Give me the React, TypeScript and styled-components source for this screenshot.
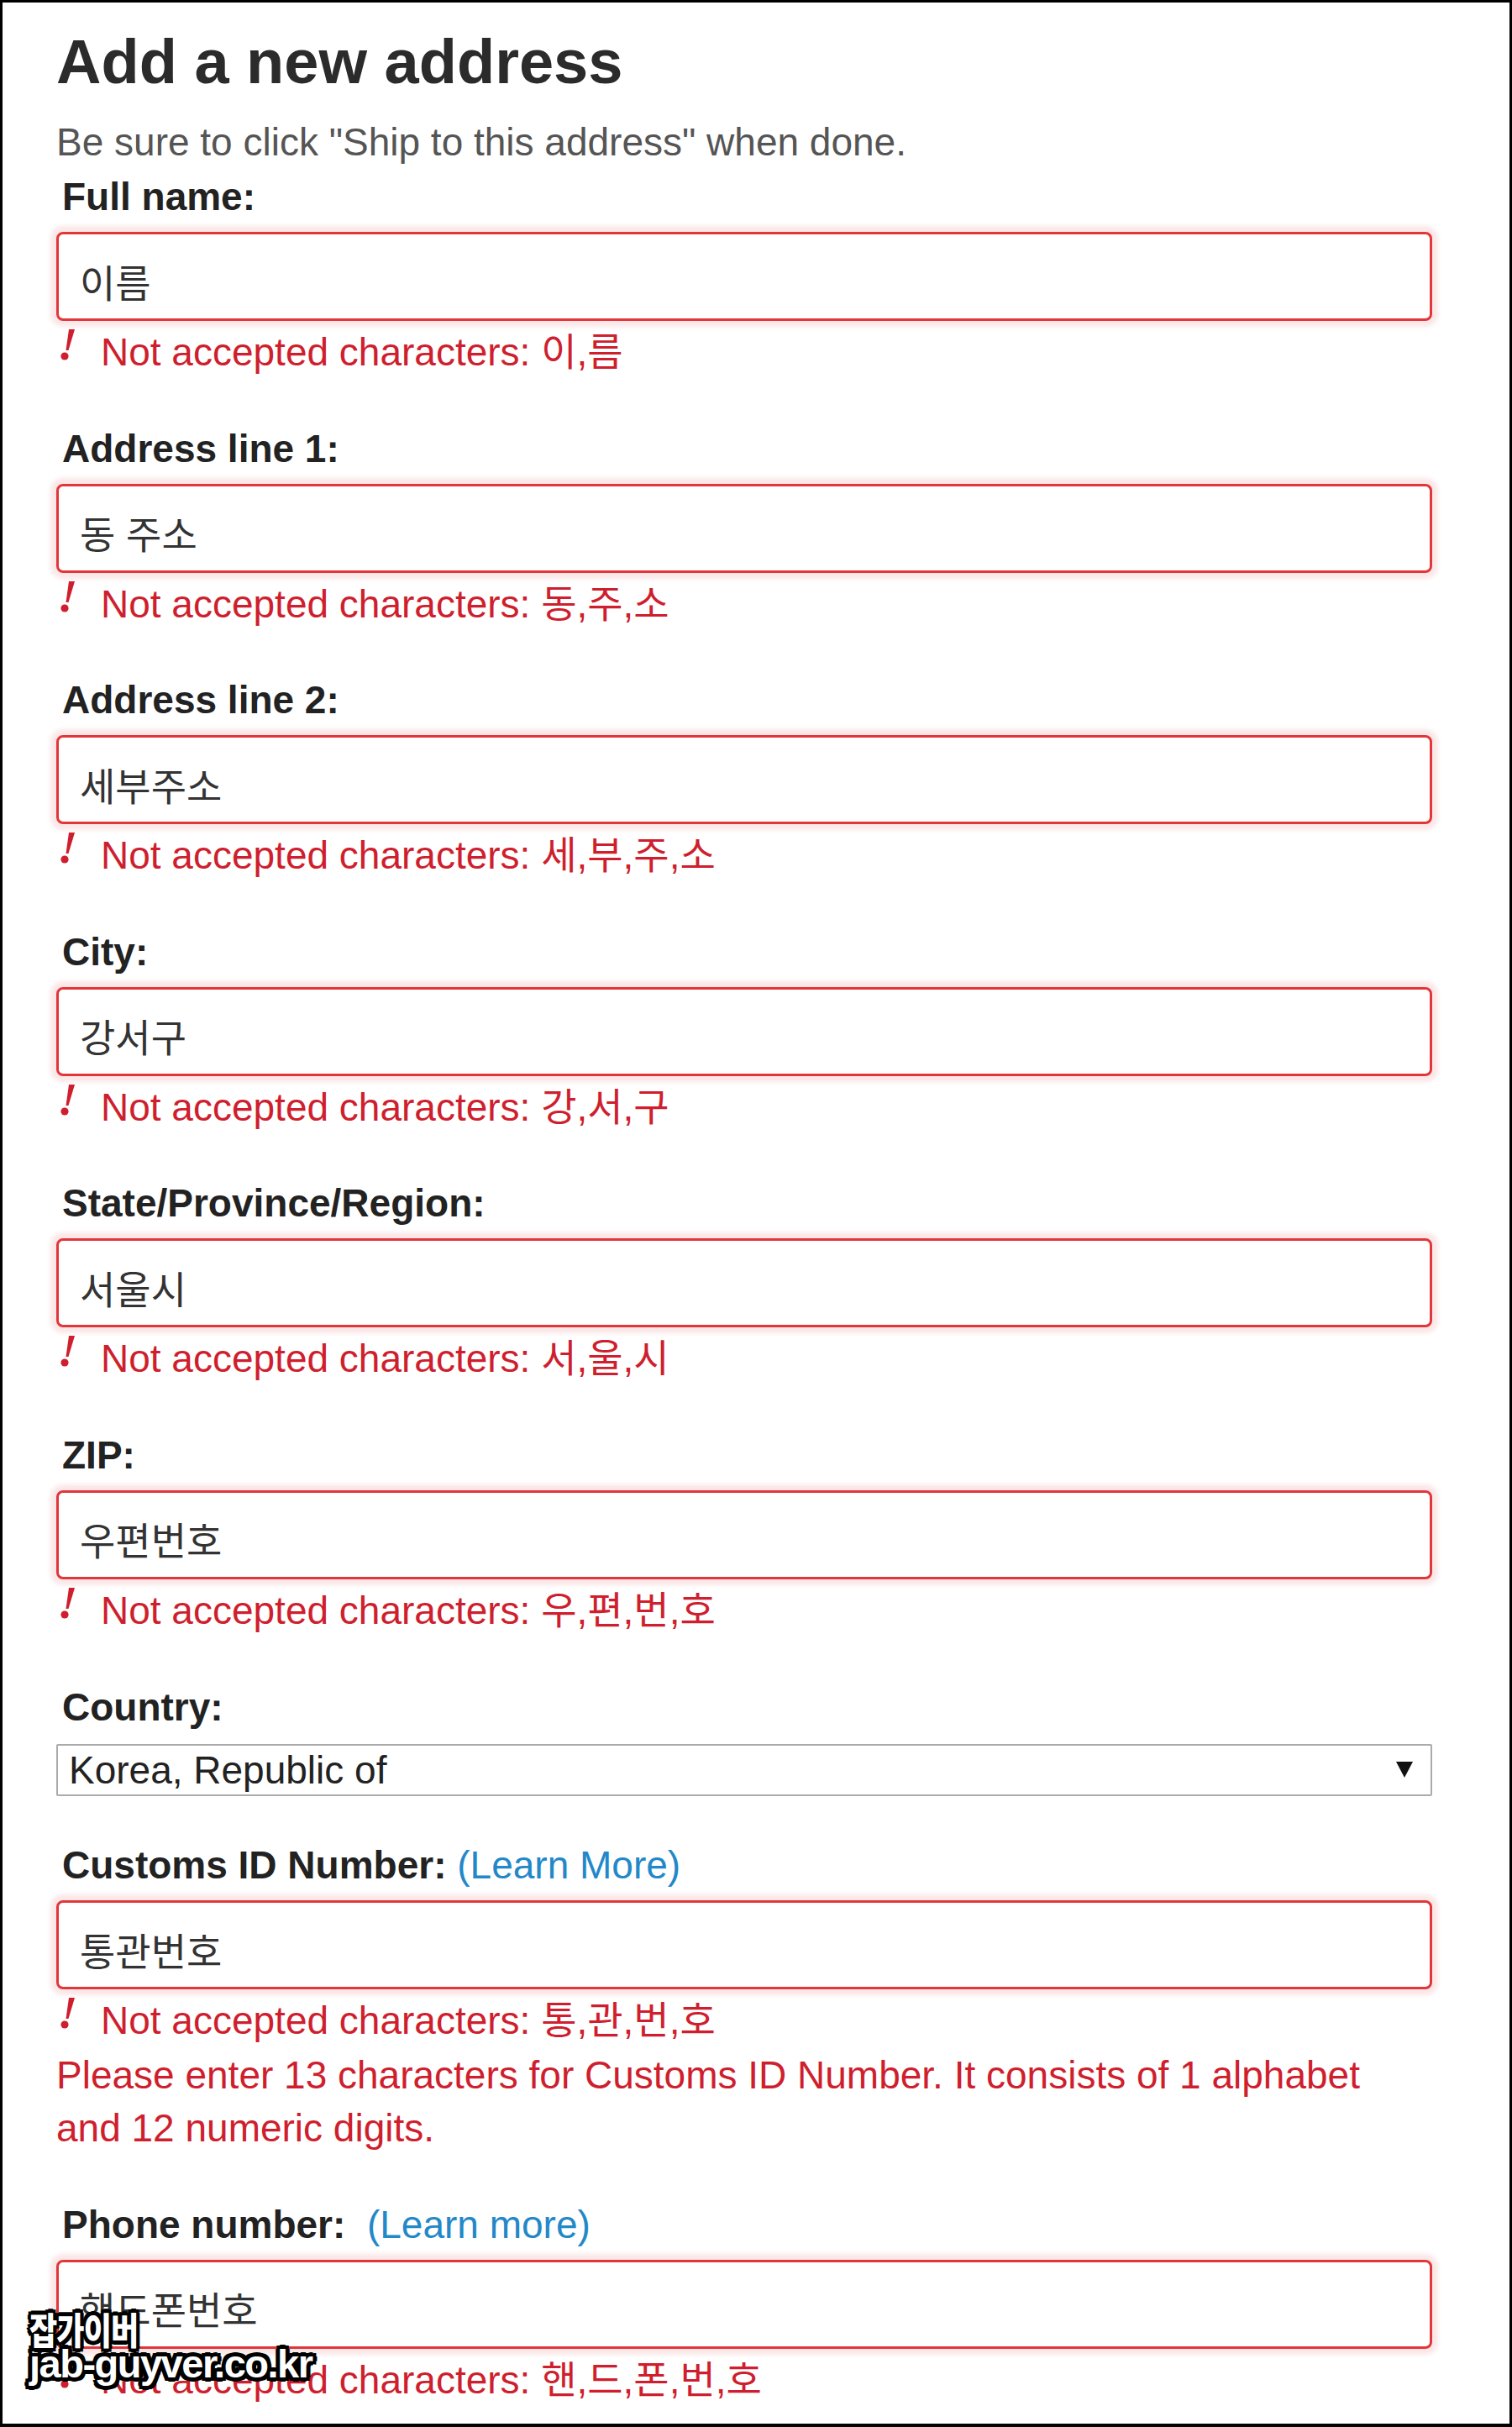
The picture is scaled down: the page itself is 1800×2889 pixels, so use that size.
import React from "react";
import styled, { createGlobalStyle } from "styled-components";

const FONT = `"Liberation Sans", "Noto Sans CJK KR", Arial, sans-serif`;
const RED = "#cf1f2e";
const LINK = "#2388c8";

const GlobalStyle = createGlobalStyle`
  html, body { margin: 0; padding: 0; background: #fff; }
  body { font-family: ${FONT}; }
  * { box-sizing: border-box; }
`;

const Frame = styled.div`
  position: relative;
  width: 1800px;
  height: 2889px;
  border: 3px solid #000;
  border-bottom-width: 4px;
  background: #fff;
  overflow: hidden;
`;

const Content = styled.main`
  width: 1638px;
  margin-left: 64px;
  padding-top: 26px;
  display: flex;
  flex-direction: column;
`;

const Title = styled.h1`
  margin: 0;
  font: bold 74px/90px ${FONT};
  color: #2b2b2b;
`;

const Intro = styled.p`
  margin: 22px 0 0;
  font: 46px/56px ${FONT};
  color: #555;
`;

const Fields = styled.div`
  margin-top: 9px;
  display: flex;
  flex-direction: column;
  gap: 58.6px;
`;

const Field = styled.section`
  display: flex;
  flex-direction: column;
`;

const Label = styled.label`
  display: block;
  padding-left: 7px;
  font: bold 46px/56px ${FONT};
  color: #222;
  white-space: pre;
`;

const LearnLink = styled.a`
  font-weight: normal;
  color: ${LINK};
  text-decoration: none;
`;

const TextInput = styled.input`
  display: block;
  width: 100%;
  height: 106px;
  margin: 14px 0 0;
  padding: 9px 25px 0;
  border: 3px solid #e2363b;
  border-radius: 8px;
  box-shadow: 0 0 5px 7px rgba(226, 54, 59, 0.12);
  background: #fff;
  font: 46px ${FONT};
  color: #333;
  outline: none;
`;

const ErrorLine = styled.div`
  display: flex;
  align-items: flex-start;
  margin-top: 9px;
  font: 46px/56px ${FONT};
  color: ${RED};
`;

const AlertIcon = styled.svg`
  flex: none;
  width: 17px;
  height: 38px;
  margin: 1px 31px 0 5px;
`;

const Note = styled.p`
  margin: 6px 0 -4px;
  font: 46px/63px ${FONT};
  color: ${RED};
`;

const SelectBox = styled.div`
  display: flex;
  align-items: center;
  justify-content: space-between;
  height: 62px;
  margin: 16px 0 -4px;
  padding: 0 21px 0 13px;
  border: 2px solid #ababab;
  border-radius: 2px;
  background: #fff;
  font: 46px/56px ${FONT};
  color: #222;
`;

const Arrow = styled.svg`
  flex: none;
  width: 20px;
  height: 19px;
`;

const Watermark = styled.div`
  position: absolute;
  left: 32px;
  top: 2748px;
  display: flex;
  flex-direction: column;
  color: #fff;
  font-weight: bold;
  text-shadow: -4px -4px 0 #000, 4px -4px 0 #000, -4px 4px 0 #000, 4px 4px 0 #000,
    0 -5px 0 #000, 0 5px 0 #000, -5px 0 0 #000, 5px 0 0 #000, 0 0 5px #000;
`;

const WatermarkKo = styled.span`
  display: block;
  font: 900 44px/42px "Noto Sans CJK KR", sans-serif;
  transform: scaleX(0.82);
  transform-origin: left center;
  letter-spacing: -1px;
`;

const WatermarkUrl = styled.span`
  display: block;
  font: bold 47px/42px "Liberation Sans", Arial, sans-serif;
  letter-spacing: -1.5px;
`;

type FieldData = {
  label: string;
  value: string;
  link?: { text: string; sep: string };
  note?: string;
};

const fields: FieldData[] = [
  { label: "Full name:", value: "이름" },
  { label: "Address line 1:", value: "동 주소" },
  { label: "Address line 2:", value: "세부주소" },
  { label: "City:", value: "강서구" },
  { label: "State/Province/Region:", value: "서울시" },
  { label: "ZIP:", value: "우편번호" },
];

const tailFields: FieldData[] = [
  {
    label: "Customs ID Number:",
    value: "통관번호",
    link: { text: "(Learn More)", sep: " " },
    note:
      "Please enter 13 characters for Customs ID Number. It consists of 1 alphabet and 12 numeric digits.",
  },
  {
    label: "Phone number:",
    value: "핸드폰번호",
    link: { text: "(Learn more)", sep: "  " },
  },
];

const Alert = () => (
  <AlertIcon viewBox="0 0 17 38">
    <path d="M10 0 L17 0 L9.5 25 L6.5 25 Z" fill={RED} />
    <circle cx="5" cy="32" r="4.6" fill={RED} />
  </AlertIcon>
);

const InputField = ({ data }: { data: FieldData }) => {
  const chars = Array.from(data.value.replace(/\s/g, "")).join(",");
  return (
    <Field>
      <Label>
        {data.label}
        {data.link && (
          <>
            {data.link.sep}
            <LearnLink href="#">{data.link.text}</LearnLink>
          </>
        )}
      </Label>
      <TextInput readOnly value={data.value} />
      <ErrorLine>
        <Alert />
        <span>Not accepted characters: {chars}</span>
      </ErrorLine>
      {data.note && <Note>{data.note}</Note>}
    </Field>
  );
};

export default function App() {
  return (
    <>
      <GlobalStyle />
      <Frame>
        <Content>
          <Title>Add a new address</Title>
          <Intro>Be sure to click "Ship to this address" when done.</Intro>
          <Fields>
            {fields.map((f) => (
              <InputField key={f.label} data={f} />
            ))}
            <Field>
              <Label>Country:</Label>
              <SelectBox>
                <span>Korea, Republic of</span>
                <Arrow viewBox="0 0 20 19">
                  <path d="M0 0 H20 L10 19 Z" fill="#111" />
                </Arrow>
              </SelectBox>
            </Field>
            {tailFields.map((f) => (
              <InputField key={f.label} data={f} />
            ))}
          </Fields>
        </Content>
        <Watermark>
          <WatermarkKo>잡가이버</WatermarkKo>
          <WatermarkUrl>jab-guyver.co.kr</WatermarkUrl>
        </Watermark>
      </Frame>
    </>
  );
}
